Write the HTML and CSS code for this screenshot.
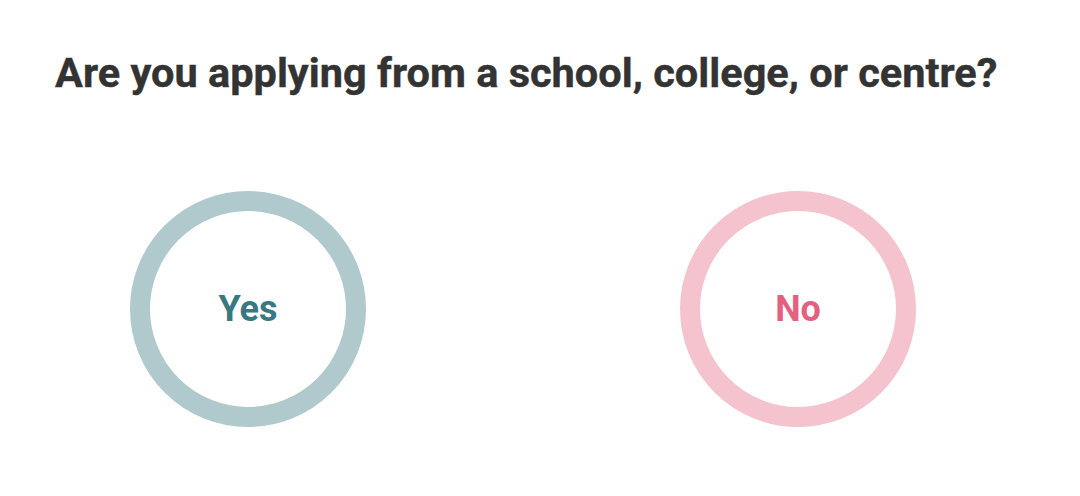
FILE: index.html
```html
<!DOCTYPE html>
<html lang="en">
<head>
<meta charset="utf-8">
<title>Applying from</title>
<link rel="stylesheet" href="styles.css">
</head>
<body>
<main class="page">
  <h1 class="question">Are you applying from a school, college, or centre?</h1>
  <div class="options">
    <button class="option option-yes" type="button">Yes</button>
    <button class="option option-no" type="button">No</button>
  </div>
</main>
</body>
</html>
```

FILE: styles.css
```css
html, body {
  margin: 0;
  padding: 0;
  background: #ffffff;
}

.page {
  padding: 46px 0 0 55px;
  font-family: Roboto, "Liberation Sans", Arial, sans-serif;
}

.question {
  margin: 0;
  font-size: 41.5px;
  font-weight: 700;
  line-height: 54px;
  color: #333333;
  letter-spacing: 0;
  -webkit-text-stroke: 0.4px #333333;
}

.options {
  display: flex;
  gap: 314px;
  margin-top: 91px;
  padding-left: 75px;
}

.option {
  box-sizing: border-box;
  width: 236px;
  height: 236px;
  border-radius: 50%;
  border: 20px solid;
  background: #ffffff;
  font-family: Roboto, "Liberation Sans", Arial, sans-serif;
  font-size: 36px;
  font-weight: 700;
  padding: 0;
  display: flex;
  align-items: center;
  justify-content: center;
  cursor: pointer;
}

.option-yes {
  border-color: #afc9cd;
  color: #377882;
}

.option-no {
  border-color: #f5c3ce;
  color: #e3617f;
}
```
